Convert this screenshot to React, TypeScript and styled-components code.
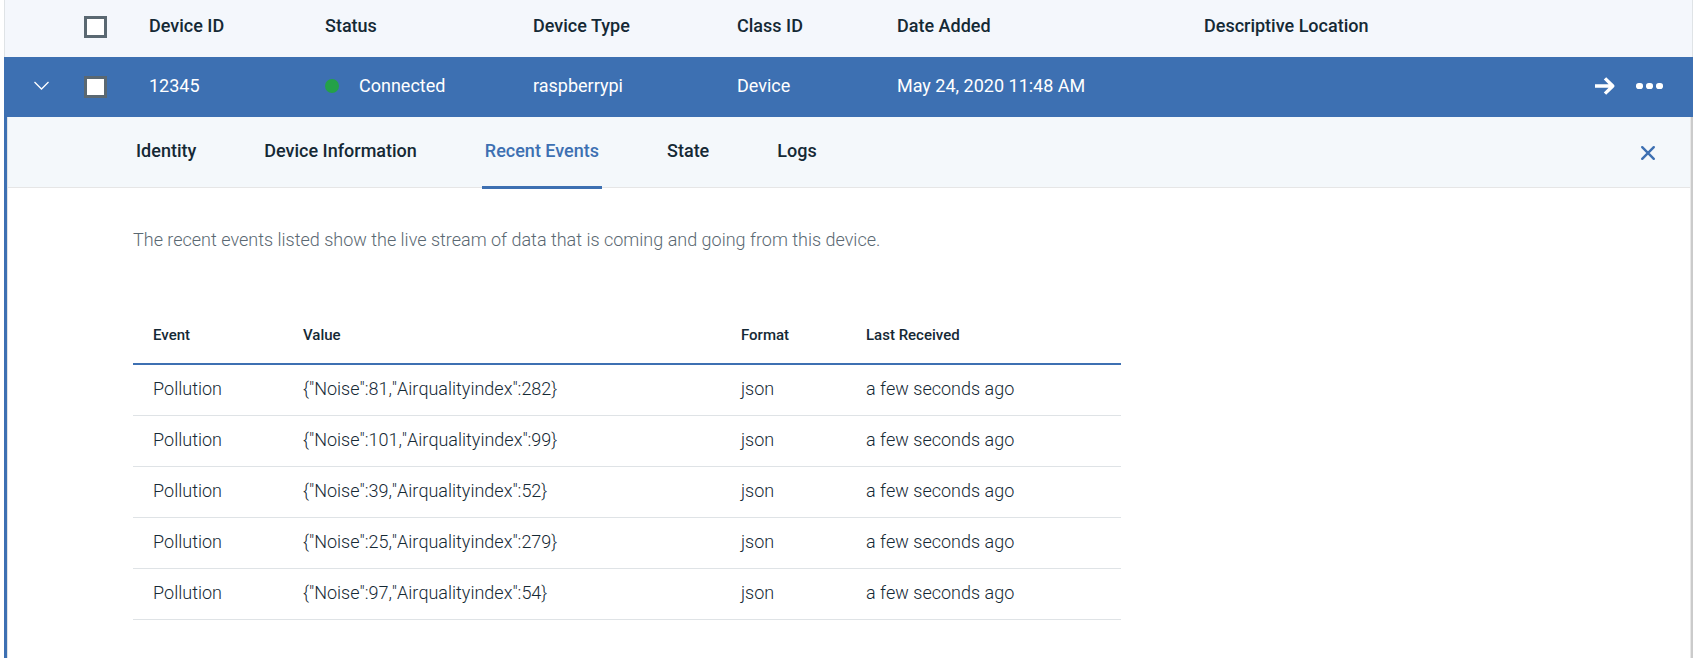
import React, { useState } from 'react';
import styled, { createGlobalStyle } from 'styled-components';

const color = {
  brand: '#3d70b2',
  text: '#152935',
  muted: '#5a6872',
  line: '#dfe3e6',
  head: '#f4f7fc',
  tabs: '#f4f8fb',
  ok: '#24a148',
};

const GlobalStyle = createGlobalStyle`
  * { box-sizing: border-box; }
  body {
    margin: 0;
    background: #fff;
    color: ${color.text};
    font-family: Roboto, "Liberation Sans", sans-serif;
    font-size: 18px;
    line-height: 24px;
  }
`;

const Page = styled.main`
  display: flex;
  flex-direction: column;
  min-height: 100vh;
  padding: 0 9px 0 4px;
`;

const DeviceTable = styled.table`
  width: 100%;
  table-layout: fixed;
  border-collapse: separate;
  border-spacing: 0;
  text-align: left;
`;

const Col = styled.col<{ $width?: number }>`
  width: ${({ $width }) => ($width ? `${$width}px` : 'auto')};
`;

const HeadCell = styled.th`
  height: 57px;
  padding: 0 0 5px;
  background: ${color.head};
  font-weight: 500;
  white-space: nowrap;

  &:first-child { border-left: 1px solid ${color.line}; }
  &:last-child { border-right: 1px solid ${color.line}; }
`;

const DeviceCell = styled.td`
  height: 60px;
  padding: 0 0 2px;
  background: ${color.brand};
  color: #fff;
  white-space: nowrap;
`;

const Checkbox = styled.input`
  appearance: none;
  display: block;
  width: 23px;
  height: 22px;
  margin: 2px 0 0;
  border: 3px solid #5a6872;
  background: #fff;

  &:checked { background: ${color.text}; box-shadow: inset 0 0 0 3px #fff; }
`;

const IconButton = styled.button`
  display: flex;
  padding: 0;
  border: 0;
  background: none;
  color: inherit;
  cursor: pointer;
`;

const Expander = styled(IconButton)`
  margin-left: 29px;
`;

const Status = styled.span`
  display: flex;
  align-items: center;
  gap: 20px;
`;

const Dot = styled.span`
  width: 14px;
  height: 14px;
  border-radius: 50%;
  background: ${color.ok};
`;

const Actions = styled.div`
  display: flex;
  align-items: center;
  justify-content: flex-end;
  gap: 20px;
  padding: 0 29px 0 0;
`;

const Details = styled.section`
  flex: 1;
  border: solid;
  border-width: 0 2px 0 3px;
  border-color: ${color.brand} #cbcbcb ${color.brand} ${color.brand};
  box-shadow: inset 1px 0 0 ${color.line}, inset -1px 0 0 #e8e8e8;
`;

const TabBar = styled.div`
  display: flex;
  align-items: flex-start;
  justify-content: space-between;
  height: 71px;
  margin: 0 1px;
  padding: 0 34px 0 125px;
  border-bottom: 1px solid #e6e6e6;
  background: ${color.tabs};
  color: ${color.brand};
`;

const TabList = styled.div`
  display: flex;
  gap: 62px;
`;

const Tab = styled.button<{ $active: boolean }>`
  height: 72px;
  padding: 0 3px 2px;
  border: 0;
  border-bottom: 3px solid ${({ $active }) => ($active ? color.brand : 'transparent')};
  background: none;
  color: ${({ $active }) => ($active ? color.brand : color.text)};
  font: inherit;
  font-weight: 500;
  white-space: nowrap;
  cursor: pointer;
`;

const CloseButton = styled(IconButton)`
  margin-top: 28px;
`;

const Panel = styled.div`
  padding: 40px 24px 38px 126px;
`;

const Intro = styled.p`
  margin: 0 0 60px;
  color: ${color.muted};
  font-weight: 300;
`;

const EventTable = styled.table`
  width: 100%;
  max-width: 988px;
  table-layout: fixed;
  border-collapse: separate;
  border-spacing: 0;
  text-align: left;
`;

const EventHead = styled.th`
  height: 53px;
  padding: 0 0 6px 20px;
  border-bottom: 2px solid ${color.brand};
  font-size: 15px;
  font-weight: 500;
`;

const EventCell = styled.td`
  height: 51px;
  padding: 0 0 2px 20px;
  border-bottom: 1px solid ${color.line};
  font-weight: 300;
  font-kerning: none;
  white-space: nowrap;
`;

const TABS = ['Identity', 'Device Information', 'Recent Events', 'State', 'Logs'];

const EVENTS = [
  { noise: 81, air: 282 },
  { noise: 101, air: 99 },
  { noise: 39, air: 52 },
  { noise: 25, air: 279 },
  { noise: 97, air: 54 },
];

const ChevronIcon = () => (
  <svg width="17" height="12" viewBox="0 0 17 12" fill="none" stroke="currentColor" strokeWidth="1.3" aria-hidden="true">
    <path d="M1.5 2L8.5 9L15.5 2" />
  </svg>
);

const ArrowIcon = () => (
  <svg width="22" height="20" viewBox="0 0 22 20" fill="none" stroke="currentColor" strokeWidth="3.4" aria-hidden="true">
    <path d="M1 10H19M11 2.4L18.8 10L11 17.6" strokeLinejoin="round" />
  </svg>
);

const MoreIcon = () => (
  <svg width="28" height="8" viewBox="0 0 28 8" fill="currentColor" aria-hidden="true">
    <rect x="0" y="1" width="7" height="6" rx="2.8" />
    <rect x="10" y="1" width="7" height="6" rx="2.8" />
    <rect x="20" y="1" width="7" height="6" rx="2.8" />
  </svg>
);

const CloseIcon = () => (
  <svg width="16" height="16" viewBox="0 0 16 16" fill="none" stroke="currentColor" strokeWidth="2.4" strokeLinecap="round" aria-hidden="true">
    <path d="M2.2 2.2L13.8 13.8M13.8 2.2L2.2 13.8" />
  </svg>
);

export default function App() {
  const [active, setActive] = useState('Recent Events');

  return (
    <>
      <GlobalStyle />
      <Page>
        <DeviceTable>
          <colgroup>
            <Col $width={80} />
            <Col $width={65} />
            <Col $width={176} />
            <Col $width={208} />
            <Col $width={204} />
            <Col $width={160} />
            <Col $width={307} />
            <Col />
            <Col $width={120} />
          </colgroup>
          <thead>
            <tr>
              <HeadCell />
              <HeadCell><Checkbox type="checkbox" aria-label="Select all devices" /></HeadCell>
              <HeadCell scope="col">Device ID</HeadCell>
              <HeadCell scope="col">Status</HeadCell>
              <HeadCell scope="col">Device Type</HeadCell>
              <HeadCell scope="col">Class ID</HeadCell>
              <HeadCell scope="col">Date Added</HeadCell>
              <HeadCell scope="col">Descriptive Location</HeadCell>
              <HeadCell />
            </tr>
          </thead>
          <tbody>
            <tr>
              <DeviceCell>
                <Expander type="button" aria-label="Collapse device" aria-expanded="true"><ChevronIcon /></Expander>
              </DeviceCell>
              <DeviceCell><Checkbox type="checkbox" aria-label="Select device 12345" /></DeviceCell>
              <DeviceCell>12345</DeviceCell>
              <DeviceCell><Status><Dot />Connected</Status></DeviceCell>
              <DeviceCell>raspberrypi</DeviceCell>
              <DeviceCell>Device</DeviceCell>
              <DeviceCell>May 24, 2020 11:48 AM</DeviceCell>
              <DeviceCell />
              <DeviceCell>
                <Actions>
                  <IconButton type="button" aria-label="Open device"><ArrowIcon /></IconButton>
                  <IconButton type="button" aria-label="More actions"><MoreIcon /></IconButton>
                </Actions>
              </DeviceCell>
            </tr>
          </tbody>
        </DeviceTable>

        <Details>
          <TabBar>
            <TabList role="tablist">
              {TABS.map((name) => (
                <Tab
                  key={name}
                  type="button"
                  role="tab"
                  aria-selected={name === active}
                  $active={name === active}
                  onClick={() => setActive(name)}
                >
                  {name}
                </Tab>
              ))}
            </TabList>
            <CloseButton type="button" aria-label="Close details"><CloseIcon /></CloseButton>
          </TabBar>

          <Panel role="tabpanel">
            <Intro>The recent events listed show the live stream of data that is coming and going from this device.</Intro>
            <EventTable>
              <colgroup>
                <Col $width={150} />
                <Col $width={438} />
                <Col $width={125} />
                <Col />
              </colgroup>
              <thead>
                <tr>
                  <EventHead scope="col">Event</EventHead>
                  <EventHead scope="col">Value</EventHead>
                  <EventHead scope="col">Format</EventHead>
                  <EventHead scope="col">Last Received</EventHead>
                </tr>
              </thead>
              <tbody>
                {EVENTS.map(({ noise, air }) => (
                  <tr key={noise}>
                    <EventCell>Pollution</EventCell>
                    <EventCell>{`{"Noise":${noise},"Airqualityindex":${air}}`}</EventCell>
                    <EventCell>json</EventCell>
                    <EventCell>a few seconds ago</EventCell>
                  </tr>
                ))}
              </tbody>
            </EventTable>
          </Panel>
        </Details>
      </Page>
    </>
  );
}
